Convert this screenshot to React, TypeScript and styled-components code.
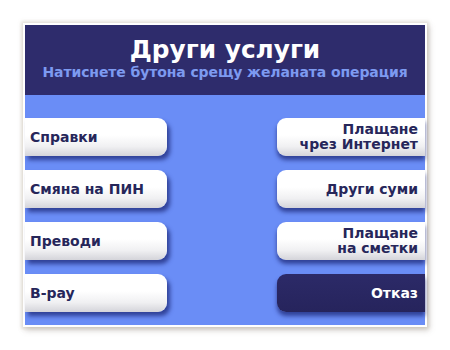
import React from "react";
import styled, { createGlobalStyle } from "styled-components";

const Global = createGlobalStyle`
  html, body {
    margin: 0;
    padding: 0;
    background: #ffffff;
  }
  body {
    font-family: "DejaVu Sans", Verdana, sans-serif;
  }
`;

const Page = styled.div`
  width: 450px;
  height: 350px;
  padding: 23px 0 0 23px;
  box-sizing: border-box;
`;

const Frame = styled.div`
  width: 400px;
  border: 2px solid #ffffff;
  box-shadow: 0 0 3px 2px rgba(190, 180, 160, 0.35), 2px 3px 6px rgba(120, 110, 100, 0.35);
  display: flex;
  flex-direction: column;
`;

const Header = styled.div`
  height: 70px;
  box-sizing: border-box;
  background: #2e2c6c;
  padding-top: 11px;
  text-align: center;
`;

const Title = styled.div`
  color: #ffffff;
  font-size: 24.8px;
  font-weight: bold;
  line-height: 28px;
`;

const Subtitle = styled.div`
  color: #7d9af0;
  font-size: 14px;
  font-weight: bold;
  line-height: 16px;
  letter-spacing: -0.1px;
`;

const Body = styled.div`
  height: 230px;
  box-sizing: border-box;
  background: #6a8df6;
  padding: 23px 0 13px;
  display: flex;
  justify-content: space-between;
`;

const Column = styled.div`
  display: flex;
  flex-direction: column;
  gap: 14px;
`;

const Button = styled.div<{ $side: "left" | "right"; $dark?: boolean }>`
  height: 38px;
  width: ${(p) => (p.$side === "left" ? "142px" : "148px")};
  box-sizing: border-box;
  display: flex;
  flex-direction: column;
  justify-content: center;
  align-items: ${(p) => (p.$side === "left" ? "flex-start" : "flex-end")};
  text-align: ${(p) => p.$side};
  padding: ${(p) => (p.$side === "left" ? "0 0 0 5px" : "0 7px 0 0")};
  border-radius: ${(p) => (p.$side === "left" ? "0 9px 9px 0" : "9px 0 0 9px")};
  background: ${(p) =>
    p.$dark
      ? "linear-gradient(#2c2a68, #26245c)"
      : "linear-gradient(#ffffff 0%, #ffffff 45%, #f0f0f2 75%, #d4d4da 100%)"};
  color: ${(p) => (p.$dark ? "#ffffff" : "#26265a")};
  box-shadow: ${(p) => (p.$side === "left" ? "3px 4px 4px" : "0 4px 4px")} rgba(30, 40, 120, 0.75);
  font-size: 14px;
  font-weight: bold;
  line-height: 15px;
`;

const left = ["Справки", "Смяна на ПИН", "Преводи", "B-pay"];
const right: { lines: string[]; dark?: boolean }[] = [
  { lines: ["Плащане", "чрез Интернет"] },
  { lines: ["Други суми"] },
  { lines: ["Плащане", "на сметки"] },
  { lines: ["Отказ"], dark: true },
];

export default function App() {
  return (
    <Page>
      <Global />
      <Frame>
        <Header>
          <Title>Други услуги</Title>
          <Subtitle>Натиснете бутона срещу желаната операция</Subtitle>
        </Header>
        <Body>
          <Column>
            {left.map((t) => (
              <Button key={t} $side="left">
                {t}
              </Button>
            ))}
          </Column>
          <Column>
            {right.map((b) => (
              <Button key={b.lines.join()} $side="right" $dark={b.dark}>
                {b.lines.map((l) => (
                  <span key={l}>{l}</span>
                ))}
              </Button>
            ))}
          </Column>
        </Body>
      </Frame>
    </Page>
  );
}
